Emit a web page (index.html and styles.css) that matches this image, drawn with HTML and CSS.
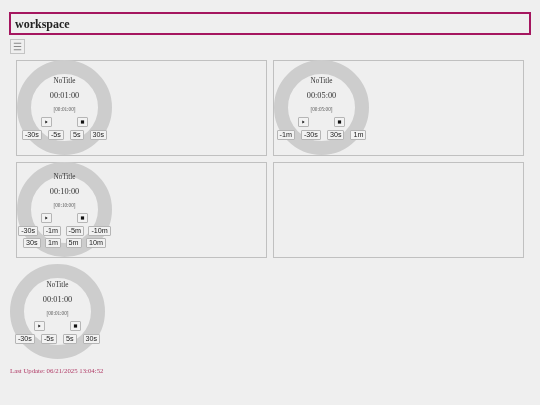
FILE: index.html
```html
<!DOCTYPE html>
<html lang="en">
<head>
<meta charset="utf-8"/>
<title>workspace</title>
<link rel="stylesheet" href="styles.css">
</head>
<body>
<div class="header">workspace</div>
<button class="menu-btn">
<svg viewBox="0 0 14 14"><path d="M3 3.5h8M3 7h8M3 10.5h8"></path></svg>
</button>

<div class="card-grid">
  <div class="card">
    <div class="timer">
      <div class="timer-title">NoTitle</div>
      <div class="timer-time">00:01:00</div>
      <div class="timer-base">[00:01:00]</div>
      <div class="timer-controls">
        <button class="ctl-btn"><svg viewBox="0 0 10 10"><path d="M3.5 3l3 2-3 2z"></path></svg></button>
        <button class="ctl-btn"><svg viewBox="0 0 10 10"><path d="M3 3h4v4H3z"></path></svg></button>
      </div>
      <div class="timer-steps">
        <button>-30s</button><button>-5s</button><button>5s</button><button>30s</button>
      </div>
    </div>
  </div>
  <div class="card">
    <div class="timer">
      <div class="timer-title">NoTitle</div>
      <div class="timer-time">00:05:00</div>
      <div class="timer-base">[00:05:00]</div>
      <div class="timer-controls">
        <button class="ctl-btn"><svg viewBox="0 0 10 10"><path d="M3.5 3l3 2-3 2z"></path></svg></button>
        <button class="ctl-btn"><svg viewBox="0 0 10 10"><path d="M3 3h4v4H3z"></path></svg></button>
      </div>
      <div class="timer-steps">
        <button>-1m</button><button>-30s</button><button>30s</button><button>1m</button>
      </div>
    </div>
  </div>
  <div class="card">
    <div class="timer timer-tall">
      <div class="timer-title">NoTitle</div>
      <div class="timer-time">00:10:00</div>
      <div class="timer-base">[00:10:00]</div>
      <div class="timer-controls">
        <button class="ctl-btn"><svg viewBox="0 0 10 10"><path d="M3.5 3l3 2-3 2z"></path></svg></button>
        <button class="ctl-btn"><svg viewBox="0 0 10 10"><path d="M3 3h4v4H3z"></path></svg></button>
      </div>
      <div class="timer-steps">
        <button>-30s</button><button>-1m</button><button>-5m</button><button>-10m</button>
      </div>
      <div class="timer-steps">
        <button>30s</button><button>1m</button><button>5m</button><button>10m</button>
      </div>
    </div>
  </div>
  <div class="card"></div>
</div>

<div class="timer timer-free">
  <div class="timer-title">NoTitle</div>
  <div class="timer-time">00:01:00</div>
  <div class="timer-base">[00:01:00]</div>
  <div class="timer-controls">
    <button class="ctl-btn"><svg viewBox="0 0 10 10"><path d="M3.5 3l3 2-3 2z"></path></svg></button>
    <button class="ctl-btn"><svg viewBox="0 0 10 10"><path d="M3 3h4v4H3z"></path></svg></button>
  </div>
  <div class="timer-steps">
    <button>-30s</button><button>-5s</button><button>5s</button><button>30s</button>
  </div>
</div>

<div class="last-update">Last Update: 06/21/2025 13:04:52</div>
</body>
</html>
```

FILE: styles.css
```css
html {
  background-color: #efefef;
}

body {
  margin: 0;
  padding: 12px 9px 0;
  font-family: "Liberation Serif", serif;
  color: #333;
  overflow: hidden;
  will-change: transform;
}

.header {
  height: 23px;
  box-sizing: border-box;
  padding-left: 4px;
  border: 2px solid #a5165f;
  font-size: 12px;
  font-weight: bold;
  line-height: 21px;
  color: #222;
}

.menu-btn {
  display: block;
  width: 15px;
  height: 15px;
  margin: 4px 0 0 1px;
  padding: 0;
  background: #efefef;
  border: 1px solid #c4c4c4;
}

.menu-btn svg {
  display: block;
  width: 13px;
  height: 13px;
  fill: none;
  stroke: #888;
  stroke-width: 1.2;
}

.card-grid {
  display: grid;
  grid-template-columns: 251px 251px;
  grid-auto-rows: 96px;
  gap: 6px;
  margin: 6px 0 0 7px;
}

.card {
  box-sizing: border-box;
  border: 1px solid #c0c0c0;
}

.card .timer {
  margin-top: -1px;
}

.timer {
  box-sizing: border-box;
  width: 95px;
  height: 95px;
  padding-top: 1px;
  border: 14px solid #cdcdcd;
  border-radius: 50%;
  display: flex;
  flex-direction: column;
  justify-content: center;
  align-items: center;
  text-align: center;
}

.timer-title {
  font-size: 7.2px;
  line-height: 8px;
}

.timer-time {
  margin-top: 6px;
  font-size: 8.3px;
  line-height: 10px;
}

.timer-base {
  margin-top: 5px;
  font-size: 5.2px;
  line-height: 6px;
  color: #555;
}

.timer-controls {
  display: flex;
  justify-content: center;
  gap: 25px;
  margin-top: 5px;
}

.ctl-btn {
  width: 11px;
  height: 10px;
  padding: 0;
  background: #f2f2f2;
  border: 1px solid #b5b5b5;
  border-radius: 1px;
}

.ctl-btn svg {
  display: block;
  width: 9px;
  height: 8px;
  fill: #111;
}

.timer-steps {
  display: flex;
  flex-shrink: 0;
  justify-content: center;
  gap: 6px;
  margin-top: 3px;
}

.timer-steps button {
  height: 10px;
  padding: 0 2px;
  background: #f2f2f2;
  border: 1px solid #b5b5b5;
  border-radius: 1px;
  font-family: "Liberation Sans", sans-serif;
  font-size: 7.2px;
  line-height: 8px;
  color: #222;
  white-space: nowrap;
}

.timer-tall .timer-steps {
  gap: 4.5px;
}

.timer-tall .timer-steps + .timer-steps {
  margin-top: 2px;
}

.timer-free {
  margin: 6px 0 0 1px;
}

.last-update {
  margin: 7px 0 0 1px;
  font-size: 6.8px;
  line-height: 9px;
  color: #b03a66;
}
```
